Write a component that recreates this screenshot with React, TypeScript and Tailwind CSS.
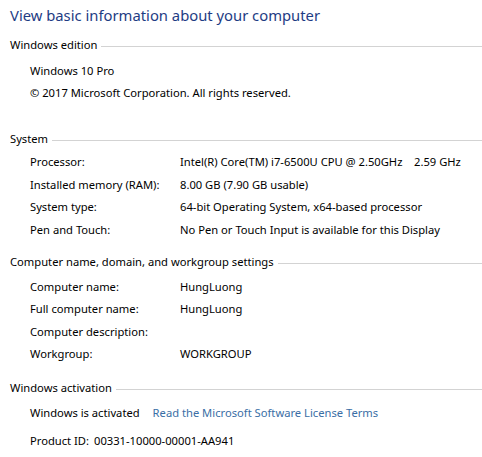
const font = { fontFamily: '"Noto Sans", "Open Sans", sans-serif' }

type Row = { label: string; value?: string }

function Header({ title, className = '' }: { title: string; className?: string }) {
  return (
    <div className={`flex h-[20px] items-center gap-1 ${className}`}>
      <span className="whitespace-nowrap">{title}</span>
      <div className="mt-[2px] h-px flex-1 bg-[#d3d3d3]" />
    </div>
  )
}

function Rows({ rows, className = '' }: { rows: Row[]; className?: string }) {
  return (
    <div className={`pl-[20px] ${className}`}>
      {rows.map((r) => (
        <div key={r.label} className="flex h-[22.5px] items-center whitespace-nowrap">
          <span className="w-[150px] shrink-0">{r.label}</span>
          {r.value && <span>{r.value}</span>}
        </div>
      ))}
    </div>
  )
}

const system: Row[] = [
  { label: 'Processor:', value: 'Intel(R) Core(TM) i7-6500U CPU @ 2.50GHz\u00a0\u00a0\u00a0\u00a02.59 GHz' },
  { label: 'Installed memory (RAM):', value: '8.00 GB (7.90 GB usable)' },
  { label: 'System type:', value: '64-bit Operating System, x64-based processor' },
  { label: 'Pen and Touch:', value: 'No Pen or Touch Input is available for this Display' },
]

const names: Row[] = [
  { label: 'Computer name:', value: 'HungLuong' },
  { label: 'Full computer name:', value: 'HungLuong' },
  { label: 'Computer description:' },
  { label: 'Workgroup:', value: 'WORKGROUP' },
]

export default function App() {
  return (
    <div className="h-[457px] w-[482px] overflow-hidden bg-white pl-[10px] text-[11.2px] text-black" style={font}>
      <div className="flex h-[30px] items-center text-[14.8px] text-[#1e3c84]">
        View basic information about your computer
      </div>

      <Header title="Windows edition" className="mt-[5px]" />
      <div className="mt-[5px] pl-[20px]">
        <div className="flex h-[22.5px] items-center">Windows 10 Pro</div>
        <div className="flex h-[22.5px] items-center">© 2017 Microsoft Corporation. All rights reserved.</div>
      </div>

      <Header title="System" className="mt-[24px]" />
      <Rows rows={system} className="mt-[2.5px]" />

      <Header title="Computer name, domain, and workgroup settings" className="mt-[10.5px]" />
      <Rows rows={names} className="mt-[4px]" />

      <Header title="Windows activation" className="mt-[12px]" />
      <div className="mt-[4px] pl-[20px]">
        <div className="flex h-[22.5px] items-center gap-[13px] whitespace-nowrap">
          <span>Windows is activated</span>
          <span className="text-[#3a6ea5]">Read the Microsoft Software License Terms</span>
        </div>
        <div className="mt-[6px] flex h-[22.5px] items-center gap-[5px] whitespace-nowrap">
          <span>Product ID:</span>
          <span>00331-10000-00001-AA941</span>
        </div>
      </div>
    </div>
  )
}
